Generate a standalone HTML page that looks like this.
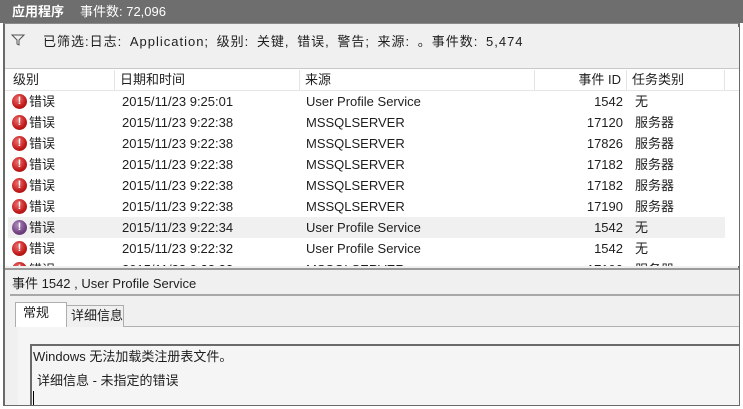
<!DOCTYPE html>
<html><head><meta charset="utf-8"><style>
*{margin:0;padding:0;box-sizing:border-box}
body{width:743px;height:409px;background:#fff;position:relative;overflow:hidden;font-family:"Liberation Sans","Noto Sans CJK SC",sans-serif;font-size:13px;color:#1e1e1e}
.a{position:absolute;white-space:nowrap}
.title{left:0;top:0;width:743px;height:23px;background:#6e6e6e;color:#fff;font-size:13px;line-height:23px}
.frame{left:3px;top:23px;width:737px;height:383px;border:2px solid #6a6a6a;border-top:1px solid #8a8a8a;background:#f0f0f0}
.filter{left:5px;top:27px;width:734px;height:42px;background:#f0f0f0;border-bottom:1px solid #c8c8c8}
.list{left:5px;top:69px;width:734px;height:197px;background:#fff}
.hdr{top:70px;height:21px;line-height:20px;border-right:1px solid #e4e4e4;padding-left:5px}
.row{left:8px;width:717px;height:21px}
.row span{position:absolute;top:0;line-height:21px}
.ic{position:absolute;left:4px;top:3px;width:15px;height:15px;border-radius:50%;background:radial-gradient(circle at 40% 35%,#f07070,#c01818 60%,#901010);color:#fff;font:bold 11px/15px "Liberation Sans",sans-serif;text-align:center}
.bot{left:5px;top:268px;width:734px;height:137px;background:#f0f0f0;border-top:2px solid #9a9a9a}
</style></head><body>
<div class="a title"><span style="position:absolute;left:12px;font-weight:bold">应用程序</span><span style="position:absolute;left:80px">事件数: 72,096</span></div>
<div class="a frame"></div>
<div class="a filter"></div>
<svg class="a" style="left:11px;top:34px" width="14" height="12"><path d="M1 1H13L8 6V11L6 10V6Z" fill="none" stroke="#555" stroke-width="1"/></svg>
<div class="a" style="left:43px;top:34px;line-height:16px;letter-spacing:1px;word-spacing:3px">已筛选:日志: Application; 级别: 关键, 错误, 警告; 来源: 。事件数: 5,474</div>
<div class="a list"></div>
<div class="a" style="left:5px;top:90px;width:734px;height:1px;background:#e6e6e6"></div>
<div class="a hdr" style="left:8px;width:107px">级别</div>
<div class="a hdr" style="left:115px;width:185px">日期和时间</div>
<div class="a hdr" style="left:300px;width:235px">来源</div>
<div class="a hdr" style="left:535px;width:92px;text-align:right;padding-right:5px">事件 ID</div>
<div class="a hdr" style="left:627px;width:98px">任务类别</div>
<div class="a hdr" style="left:725px;width:14px;border:none"></div>

<div class="a row" style="top:91px"><i class="ic">!</i><span style="left:21px">错误</span><span style="left:114px">2015/11/23 9:25:01</span><span style="left:298px">User Profile Service</span><span style="left:540px;width:75px;text-align:right">1542</span><span style="left:627px">无</span></div>
<div class="a row" style="top:112px"><i class="ic">!</i><span style="left:21px">错误</span><span style="left:114px">2015/11/23 9:22:38</span><span style="left:298px">MSSQLSERVER</span><span style="left:540px;width:75px;text-align:right">17120</span><span style="left:627px">服务器</span></div>
<div class="a row" style="top:133px"><i class="ic">!</i><span style="left:21px">错误</span><span style="left:114px">2015/11/23 9:22:38</span><span style="left:298px">MSSQLSERVER</span><span style="left:540px;width:75px;text-align:right">17826</span><span style="left:627px">服务器</span></div>
<div class="a row" style="top:154px"><i class="ic">!</i><span style="left:21px">错误</span><span style="left:114px">2015/11/23 9:22:38</span><span style="left:298px">MSSQLSERVER</span><span style="left:540px;width:75px;text-align:right">17182</span><span style="left:627px">服务器</span></div>
<div class="a row" style="top:175px"><i class="ic">!</i><span style="left:21px">错误</span><span style="left:114px">2015/11/23 9:22:38</span><span style="left:298px">MSSQLSERVER</span><span style="left:540px;width:75px;text-align:right">17182</span><span style="left:627px">服务器</span></div>
<div class="a row" style="top:196px"><i class="ic">!</i><span style="left:21px">错误</span><span style="left:114px">2015/11/23 9:22:38</span><span style="left:298px">MSSQLSERVER</span><span style="left:540px;width:75px;text-align:right">17190</span><span style="left:627px">服务器</span></div>
<div class="a row" style="top:217px;background:#f0f0f0"><i class="ic" style="background:radial-gradient(circle at 40% 35%,#b090c0,#704080 60%,#503060)">!</i><span style="left:21px">错误</span><span style="left:114px">2015/11/23 9:22:34</span><span style="left:298px">User Profile Service</span><span style="left:540px;width:75px;text-align:right">1542</span><span style="left:627px">无</span></div>
<div class="a row" style="top:238px"><i class="ic">!</i><span style="left:21px">错误</span><span style="left:114px">2015/11/23 9:22:32</span><span style="left:298px">User Profile Service</span><span style="left:540px;width:75px;text-align:right">1542</span><span style="left:627px">无</span></div>
<div class="a row" style="top:259px;height:7px;overflow:hidden"><i class="ic">!</i><span style="left:21px">错误</span><span style="left:114px">2015/11/23 9:22:32</span><span style="left:298px">MSSQLSERVER</span><span style="left:540px;width:75px;text-align:right">17190</span><span style="left:627px">服务器</span></div>

<div class="a bot"></div>
<div class="a" style="left:12px;top:275px;line-height:17px">事件 1542 , User Profile Service</div>
<div class="a" style="left:10px;top:294px;width:729px;height:2px;background:#a8a8a8"></div>
<div class="a" style="left:18px;top:326px;width:721px;height:79px;background:#f5f5f5;border-top:1px solid #b0b0b0"></div>
<div class="a" style="left:66px;top:305px;width:58px;height:22px;border:1px solid #adadad;border-bottom:none;background:#f0f0f0;line-height:20px;padding-left:4px">详细信息</div>
<div class="a" style="left:15px;top:302px;width:52px;height:25px;border:1px solid #adadad;border-bottom:none;background:#fff;line-height:20px;padding-left:7px">常规</div>
<div class="a" style="left:30px;top:344px;width:709px;height:61px;border-left:2px solid #6a6a6a;border-top:2px solid #6a6a6a;background:#f5f5f5"></div>
<div class="a" style="left:33px;top:348px;line-height:17px">Windows 无法加载类注册表文件。</div>
<div class="a" style="left:37px;top:372px;line-height:17px">详细信息 - 未指定的错误</div>
<div class="a" style="left:33px;top:391px;width:1px;height:14px;background:#000"></div>
</body></html>
